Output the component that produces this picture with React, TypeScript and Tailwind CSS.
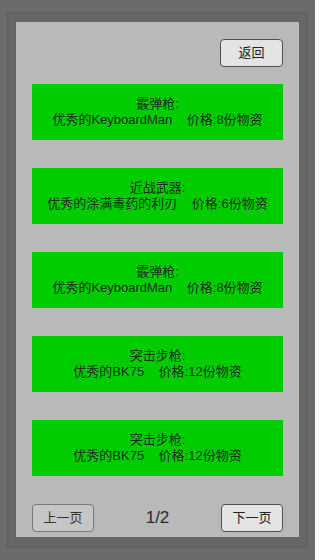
const items = [
  { title: "霰弹枪:", desc: "优秀的KeyboardMan", price: "价格:8份物资" },
  { title: "近战武器:", desc: "优秀的涂满毒药的利刃", price: "价格:6份物资" },
  { title: "霰弹枪:", desc: "优秀的KeyboardMan", price: "价格:8份物资" },
  { title: "突击步枪:", desc: "优秀的BK75", price: "价格:12份物资" },
  { title: "突击步枪:", desc: "优秀的BK75", price: "价格:12份物资" },
];

const font = { fontFamily: '"Liberation Sans", "Noto Sans CJK SC", sans-serif' };

export default function App() {
  return (
    <div className="h-[560px] w-[315px] bg-[#6b6b6b] pt-[12px] pl-[7px]" style={font}>
      <div className="h-[536px] w-[301px] bg-[#666666] pt-[10px] pl-[9px] shadow-[inset_0_0_2px_rgba(0,0,0,0.25)]">
        <div className="flex h-[515px] w-[283px] flex-col bg-[#b9b9b9] px-[16px] pt-[17px] pb-[5px]">
          <div className="flex justify-end">
            <button className="h-[28px] w-[63px] rounded-[4px] border border-[#505050] bg-[#e4e4e4] text-[13px] text-[#222]">
              返回
            </button>
          </div>
          <div className="mt-[17px] flex flex-col gap-[28px]">
            {items.map((it, i) => (
              <div
                key={i}
                className="flex h-[56px] flex-col items-center justify-center bg-[#00cc00] text-[13px] leading-[16px] text-[#1e2e1e]"
              >
                <span>{it.title}</span>
                <span className="whitespace-pre">
                  {it.desc}
                  {"    "}
                  {it.price}
                </span>
              </div>
            ))}
          </div>
          <div className="mt-auto flex items-center justify-between">
            <button className="h-[28px] w-[62px] rounded-[4px] border border-[#7a7a7a] bg-[#c6c6c6] text-[13px] text-[#333]">
              上一页
            </button>
            <span className="text-[17px] text-[#2a2a2a]">1/2</span>
            <button className="h-[28px] w-[62px] rounded-[4px] border border-[#505050] bg-[#e4e4e4] text-[13px] text-[#222]">
              下一页
            </button>
          </div>
        </div>
      </div>
    </div>
  );
}
